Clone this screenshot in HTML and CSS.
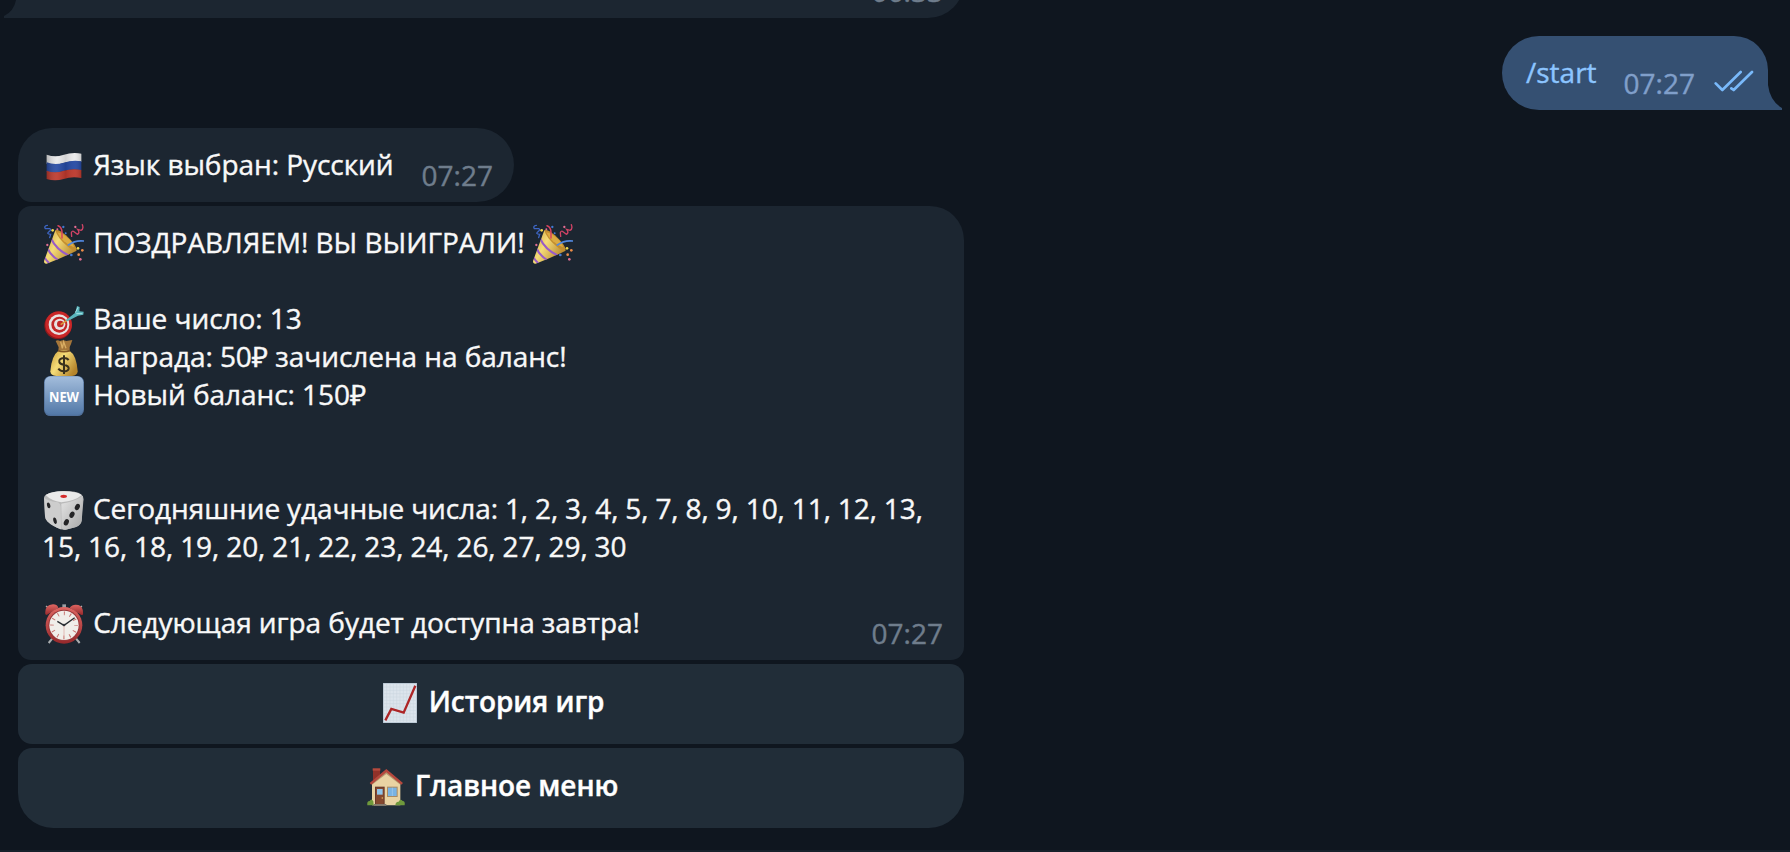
FILE: index.html
```html
<!DOCTYPE html>
<html lang="ru">
<head>
<meta charset="utf-8">
<title>Чат</title>
<link rel="stylesheet" href="styles.css">
</head>
<body>
<svg class="defs" aria-hidden="true">
  <defs>
    <linearGradient id="gold" x1="0" y1="0" x2="1" y2="0.6"><stop offset="0" stop-color="#c99a35"/><stop offset=".45" stop-color="#f5dc78"/><stop offset="1" stop-color="#b5852c"/></linearGradient>
    <linearGradient id="blue" x1="0" y1="0" x2="0" y2="1"><stop offset="0" stop-color="#a3bddc"/><stop offset="1" stop-color="#5379a8"/></linearGradient>
    <linearGradient id="silver" x1="0" y1="0" x2="1" y2="1"><stop offset="0" stop-color="#e6e6e6"/><stop offset="1" stop-color="#a8a8a8"/></linearGradient>
    <linearGradient id="red" x1="0" y1="0" x2="0" y2="1"><stop offset="0" stop-color="#e06763"/><stop offset="1" stop-color="#96282b"/></linearGradient>
    <linearGradient id="shade" x1="0" y1="0" x2="1" y2="0"><stop offset="0" stop-color="#000" stop-opacity=".22"/><stop offset=".3" stop-color="#fff" stop-opacity=".08"/><stop offset=".55" stop-color="#000" stop-opacity=".1"/><stop offset=".8" stop-color="#fff" stop-opacity=".05"/><stop offset="1" stop-color="#000" stop-opacity=".15"/></linearGradient>
    <clipPath id="cone"><path d="M76 61 L140 122 Q96 144 50 161 Q42 162 42 153Z"/></clipPath>
    <symbol id="party" viewBox="42 42 120 120">
      <path d="M76 61 L140 122 Q96 144 50 161 Q42 162 42 153Z" fill="url(#gold)"/>
      <g clip-path="url(#cone)" fill="none" stroke="#9a5cc6" stroke-width="6"><path d="M64 87Q78 118 117 137"/><path d="M53 115Q61 136 86 151"/><path d="M42 139Q47 150 58 160"/></g>
      <path d="M76 61Q84 56 108 76Q140 106 140 120Q136 129 112 109Q82 84 76 61Z" fill="#c38e2f"/>
      <path d="M82 67Q98 70 116 86Q130 99 132 112Q118 108 102 94Q87 80 82 67Z" fill="#dcab42"/>
      <g fill="none" stroke-width="4.5" stroke-linecap="round"><path d="M84 47Q96 51 96 68V84" stroke="#d9435f"/><path d="M115 105Q136 90 161 93" stroke="#5288df" stroke-width="5"/><path d="M52 46Q41 48 46 56L59 56Q66 59 57 65Q48 72 62 73L59 83" stroke="#3e66c4" stroke-width="4"/><path d="M157 44Q162 57 153 61L143 58Q151 69 142 73L132 65Q127 61 124 68L125 79" stroke="#cf4365" stroke-width="4"/></g>
      <g fill="#4379d1"><circle cx="100" cy="51" r="3.5"/><circle cx="107" cy="70" r="3"/><circle cx="124" cy="135" r="4"/></g><g fill="#f2d94f"><circle cx="68" cy="61" r="4"/><circle cx="144" cy="115" r="4"/></g><g fill="#ec8c47"><circle cx="157" cy="121" r="4"/><circle cx="146" cy="134" r="4"/></g><g fill="#e26d92"><circle cx="136" cy="51" r="3.5"/><circle cx="151" cy="148" r="4"/><circle cx="52" cy="105" r="3.5"/><circle cx="82" cy="58" r="3"/></g>
    </symbol>
  </defs>
</svg>
<main class="chat">
  <section class="message message-cut">
    <svg class="cut-tail" viewBox="0 0 14 18"><path d="M14 0H12Q10 11 0 16V18H14Z"/></svg>
    <time class="time">06:33</time>
  </section>

  <section class="message message-out">
    <span class="command">/start</span>
    <time class="time">07:27</time>
    <svg class="ticks" viewBox="704 150 118 66"><path d="M708 190L728 210L783 156M755 205L762 210L817 156"/></svg>
    <svg class="out-tail" viewBox="0 0 15 25"><path d="M0 0H1Q3 16 15 23V25H0Z"/></svg>
  </section>

  <section class="message message-lang">
    <p class="text"><svg class="emoji" viewBox="-3 7 120 120">
      <path d="M5 33Q30 42 54 34Q84 24 109 30V54Q82 50 56 58Q30 67 5 60Z" fill="#e9e9ea"/>
      <path d="M5 56Q30 66 56 57Q84 48 109 53V80Q82 74 56 82Q30 91 5 84Z" fill="#2549a3"/>
      <path d="M5 81Q30 91 56 81Q84 73 109 79V103Q80 98 56 106Q30 114 5 106Z" fill="#bd382c"/>
      <path d="M5 33Q30 42 54 34Q84 24 109 30V103Q80 98 56 106Q30 114 5 106Z" fill="url(#shade)"/></svg> Язык выбран: Русский</p>
    <time class="time">07:27</time>
  </section>

  <section class="message message-win">
    <p class="text"><svg class="emoji"><use href="#party"/></svg> ПОЗДРАВЛЯЕМ! ВЫ ВЫИГРАЛИ! <svg class="emoji emoji-end"><use href="#party"/></svg></p>
    <p class="text gap-1"><svg class="emoji" viewBox="42 15 120 120">
      <circle cx="84" cy="92" r="41" fill="#8d191b"/><circle cx="86" cy="89" r="40" fill="#c92728"/><circle cx="87" cy="89" r="31" fill="#e8e2e2"/><circle cx="88" cy="89" r="24" fill="#c22828"/><circle cx="89" cy="88" r="17" fill="#e8e2e2"/><circle cx="91" cy="87" r="10" fill="#c22828"/>
      <path d="M92 89L115 73" stroke="#d79b3c" stroke-width="5"/><path d="M107 76L136 53L141 33L149 36L148 49L161 50L160 59L144 62L112 79Z" fill="#59b4bc"/><path d="M136 53L144 37M139 56L157 56" stroke="#a7e4e5" stroke-width="3"/></svg> Ваше число: 13</p>
    <p class="text"><svg class="emoji" viewBox="42 129 120 120">
      <path d="M77 138Q83 133 90 138Q99 133 109 138L127 135Q124 146 119 156L119 167H85L86 157Z" fill="#a5763a"/><path d="M92 140L97 160L101 141L108 160" fill="none" stroke="#d9ad63" stroke-width="4"/>
      <path d="M84 169Q100 162 120 169Q139 180 143 229Q142 242 126 243H79Q61 242 61 229Q65 182 84 169Z" fill="url(#gold)"/><path d="M84 167Q102 173 120 167" fill="none" stroke="#805423" stroke-width="5"/>
      <path d="M116 195Q110 188 101 189Q86 191 88 201Q89 207 101 209Q117 212 116 221Q114 229 101 229Q91 229 85 221M102 181V237" fill="none" stroke="#39301d" stroke-width="6"/></svg> Награда: 50₽ зачислена на баланс!</p>
    <p class="text"><svg class="emoji" viewBox="42 243 120 120"><rect x="42" y="243" width="120" height="120" rx="19" fill="#50709b"/><rect x="44" y="244" width="116" height="115" rx="18" fill="url(#blue)"/><text class="new" x="102" y="320" textLength="90" lengthAdjust="spacingAndGlyphs">NEW</text></svg> Новый баланс: 150₽</p>
    <p class="text numbers gap-2"><svg class="emoji" viewBox="42 30 120 120">
      <path d="M48 44Q68 33 101 33Q140 33 153 43Q163 49 160 64L155 123Q153 135 138 141L108 149Q94 151 81 143L53 125Q46 120 45 108L42 58Q41 48 48 44Z" fill="#bababa"/>
      <path d="M47 45Q69 33 101 34Q138 34 155 45Q137 62 94 67Q63 62 47 45Z" fill="#eaeaea"/><path d="M43 53Q48 61 84 67Q92 71 92 80L93 148Q64 138 52 124Q46 119 45 108Z" fill="#cdcdcd"/><path d="M94 71Q132 66 158 48L155 121Q152 134 138 141L106 149Q95 150 95 138Z" fill="url(#silver)"/>
      <ellipse cx="101" cy="49" rx="10" ry="5" fill="#d42a2b"/><g fill="#242426"><ellipse cx="56" cy="76" rx="5" ry="9" transform="rotate(-15 56 76)"/><ellipse cx="75" cy="122" rx="5" ry="10" transform="rotate(-13 75 122)"/><ellipse cx="142" cy="81" rx="7" ry="10" transform="rotate(27 142 81)"/><ellipse cx="126" cy="104" rx="7" ry="10" transform="rotate(27 126 104)"/><ellipse cx="109" cy="127" rx="7" ry="10" transform="rotate(27 109 127)"/></g></svg> Сегодняшние удачные числа: 1, 2, 3, 4, 5, 7, 8, 9, 10, 11, 12, 13,<br>15, 16, 18, 19, 20, 21, 22, 23, 24, 26, 27, 29, 30</p>
    <p class="text gap-1"><svg class="emoji" viewBox="42 42 120 120">
      <path d="M69 143L56 159M136 143L149 159" stroke="#a9adaf" stroke-width="6"/><path d="M97 43H108V55H97Z" fill="#999fa4"/><path d="M48 48L56 55M156 48L148 55" stroke="#aaa" stroke-width="4"/><path d="M46 73Q43 45 69 43Q81 43 85 53L50 75ZM119 53Q128 41 145 45Q161 50 159 74L154 75Z" fill="url(#red)"/>
      <circle cx="102" cy="106" r="55" fill="url(#red)"/><circle cx="102" cy="106" r="47" fill="#98383a"/><circle cx="102" cy="106" r="44" fill="#f1eeea"/>
      <circle cx="102" cy="106" r="36" fill="none" stroke="#c77472" stroke-width="11" stroke-dasharray="3 15.85" stroke-dashoffset="1.5"/><path d="M102 106V148" stroke="#dba29b" stroke-width="2"/><path d="M82 94L102 106L134 83" fill="none" stroke="#292d32" stroke-width="4"/><circle cx="102" cy="105" r="4" fill="#30343a"/></svg> Следующая игра будет доступна завтра!</p>
    <time class="time corner-time">07:27</time>
  </section>

  <button class="action"><svg class="emoji" viewBox="60 36 120 120">
    <rect x="69" y="36" width="102" height="120" fill="#aebdcb"/><rect x="71" y="38" width="98" height="116" fill="#dce4ec"/>
    <path d="M80 38V154M90 38V154M100 38V154M110 38V154M120 38V154M130 38V154M140 38V154M150 38V154M160 38V154M71 48H169M71 58H169M71 68H169M71 78H169M71 88H169M71 98H169M71 108H169M71 118H169M71 128H169M71 138H169M71 148H169" stroke="#c9d4de" stroke-width="1.5"/>
    <path d="M76 148L94 114L131 125L166 44" fill="none" stroke="#ad2526" stroke-width="7"/></svg> История игр</button>
  <button class="action action-last"><svg class="emoji" viewBox="18 288 120 120">
    <path d="M39 293H60V320L39 336Z" fill="#903129"/><path d="M38 292H61V299H38Z" fill="#b54a3e"/>
    <path d="M36 334L79 301L121 334V403H36Z" fill="#e9d3a3"/><path d="M36 334L79 301L121 334V341L79 309L36 341Z" fill="#b49b70"/><path d="M29 336L79 294L129 336L124 341L79 304L34 341Z" fill="#b5483d"/>
    <rect x="45" y="347" width="29" height="54" fill="#68392a"/><rect x="48" y="350" width="23" height="51" fill="#84482f"/><rect x="51" y="354" width="17" height="17" fill="#8fc4e9"/><circle cx="67" cy="381" r="2.5" fill="#e2b45c"/>
    <rect x="81" y="347" width="32" height="31" fill="#a98b63"/><rect x="84" y="350" width="26" height="25" fill="#79b3e4"/><path d="M97 350V375" stroke="#a9cfec" stroke-width="2"/><path d="M41 399H79V405H41Z" fill="#82796d"/>
    <path d="M22 403Q20 390 29 390Q34 380 40 391L41 403ZM106 403Q107 391 116 392Q121 381 128 390Q136 390 134 403Z" fill="#6f993c"/></svg> Главное меню</button>
</main>
<div class="composer-edge"></div>
</body>
</html>
```
FILE: styles.css
```css
* { box-sizing: border-box; }
html, body { height: 100%; }
body {
  margin: 0;
  overflow: hidden;
  display: flex;
  flex-direction: column;
  justify-content: space-between;
  background: #0f161f;
  color: #f8f8f8;
  font: 28px/38px "Open Sans", "Noto Sans", sans-serif;
  -webkit-text-stroke: 0.4px currentColor;
}
.defs { position: absolute; width: 0; height: 0; }
.chat {
  display: flex;
  flex-direction: column;
  align-items: flex-start;
  padding: 0 22px 0 18px;
}
.message { position: relative; background: #1c2631; }
.text { margin: 0; white-space: nowrap; letter-spacing: -0.06px; }
.numbers { word-spacing: -0.25px; }
.time { color: #6f7d8c; }
.emoji {
  display: inline-block;
  width: 40px;
  height: 40px;
  margin: -6px 2px -6px 2px;
  vertical-align: -4.5px;
}
.emoji-end { margin-left: 1px; }
.message-cut {
  display: flex;
  align-items: flex-end;
  justify-content: flex-end;
  width: 946px;
  height: 18px;
  padding: 0 21px 8px 0;
  background: none;
}
.message-cut::before {
  content: "";
  position: absolute;
  inset: -62px 0 0;
  border-radius: 36px 36px 36px 0;
  background: #1c2631;
}
.message-cut .time { position: relative; }
.cut-tail {
  position: absolute;
  left: -14px;
  bottom: 0;
  width: 14px;
  height: 18px;
  fill: #1c2631;
}
.message-out {
  align-self: flex-end;
  display: flex;
  width: 266px;
  height: 74px;
  margin-top: 18px;
  padding: 17px 14px 0 24px;
  border-radius: 37px 34px 0 37px;
  background: #355072;
}
.command { color: #8cc5ff; }
.message-out .time { margin: 11px 0 0 27px; color: #809fca; }
.ticks {
  width: 40px;
  height: 22px;
  margin: 17px 0 0 19px;
  fill: none;
  stroke: #79b9fa;
  stroke-width: 8;
  stroke-linecap: round;
  stroke-linejoin: round;
}
.out-tail {
  position: absolute;
  right: -14px;
  bottom: 0;
  width: 15px;
  height: 25px;
  fill: #355072;
}
.message-lang {
  display: flex;
  justify-content: space-between;
  width: 496px;
  height: 74px;
  margin-top: 18px;
  padding: 17px 21px 0 24px;
  border-radius: 34px 37px 37px 13px;
}
.message-lang .time { margin-top: 11px; }
.message-win {
  width: 946px;
  height: 454px;
  margin-top: 4px;
  padding: 17px 20px 19px 24px;
  border-radius: 13px 34px 13px 13px;
}
.gap-1 { margin-top: 38px; }
.gap-2 { margin-top: 76px; }
.corner-time { position: absolute; right: 21px; bottom: 8px; }
.new {
  fill: #fff;
  font: 700 44px "Open Sans", "Noto Sans", sans-serif;
  letter-spacing: 0;
  text-anchor: middle;
}
.action {
  width: 946px;
  height: 80px;
  margin: 4px 0 0;
  padding: 0 0 6px;
  border: 0;
  border-radius: 14px;
  background: #212d38;
  color: #fff;
  font: 600 28px/38px "Open Sans", "Noto Sans", sans-serif;
  letter-spacing: -0.06px;
}
.action-last { border-radius: 14px 14px 35px 35px; }
.composer-edge { height: 2px; flex: none; background: #17212b; }
```
